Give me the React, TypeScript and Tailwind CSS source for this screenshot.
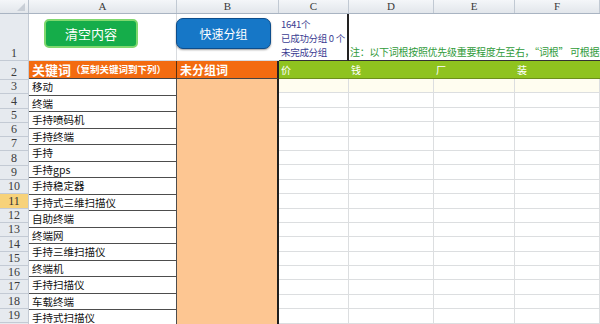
import React from "react";

const cols = ["A", "B", "C", "D", "E", "F"];
const colW = ["w-[148px]", "w-[102px]", "w-[70px]", "w-[85px]", "w-[81px]", "w-[85px]"];

const words = [
  "移动",
  "终端",
  "手持喷码机",
  "手持终端",
  "手持",
  "手持gps",
  "手持稳定器",
  "手持式三维扫描仪",
  "自助终端",
  "终端网",
  "手持三维扫描仪",
  "终端机",
  "手持扫描仪",
  "车载终端",
  "手持式扫描仪",
  "",
];

const labels = Array.from({ length: 18 }, (_, i) => i + 3);

const cjk = "font-['Noto_Sans_CJK_SC','Noto_Sans',sans-serif]";
const num = "font-['Liberation_Serif',serif]";

function RowLabel({ n, h, active }: { n: number; h: string; active?: boolean }) {
  return (
    <div
      className={`w-[29px] ${h} shrink-0 flex items-end justify-center border-b border-r border-[#c3cad4] text-[12px] leading-[14px] ${num} ${
        active ? "bg-[#f7d27a] text-[#333]" : "bg-[#e6eaef] text-[#3b3b3b]"
      }`}
    >
      {n}
    </div>
  );
}

export default function App() {
  return (
    <div className="w-[600px] h-[324px] overflow-hidden bg-white select-none">
      {/* column headers */}
      <div className="flex h-[14px] bg-gradient-to-b from-[#f4f6f9] to-[#e2e6eb] border-b border-[#a9b4c2]">
        <div className="w-[29px] shrink-0 border-r border-[#b9c2cd] relative">
          <div className="absolute right-[3px] bottom-[2px] w-0 h-0 border-l-[8px] border-l-transparent border-b-[8px] border-b-[#c8ced6]" />
        </div>
        {cols.map((c, i) => (
          <div
            key={c}
            className={`${colW[i]} shrink-0 border-r border-[#c1c9d3] flex items-center justify-center text-[11px] text-[#3a3a3a] ${num}`}
          >
            {c}
          </div>
        ))}
      </div>

      <div className="flex">
        {/* row numbers */}
        <div className="flex flex-col w-[29px] shrink-0">
          <RowLabel n={1} h="h-[47px]" />
          <RowLabel n={2} h="h-[19px]" />
          {labels.map((n) => (
            <RowLabel key={n} n={n} h="h-[14.3px]" active={n === 11} />
          ))}
        </div>

        <div className="flex flex-col flex-1">
          {/* row 1 */}
          <div className="flex h-[47px]">
            <div className="w-[148px] shrink-0 pl-[15px] pt-[5px] border-b border-r border-[#d8dbdf]">
              <div className={`w-[94px] h-[29px] rounded-[5px] bg-[#15ad4a] border-2 border-[#7fd86e] flex items-center justify-center text-white text-[13px] ${cjk}`}>
                清空内容
              </div>
            </div>
            <div className="w-[102px] shrink-0 pt-[4px] border-b border-[#d8dbdf]">
              <div className={`-ml-px w-[95px] h-[31px] rounded-[7px] bg-[#1677c7] border border-[#0c4d8c] shadow-[0_1px_2px_rgba(0,0,0,0.4)] flex items-center justify-center text-white text-[12px] ${cjk}`}>
                快速分组
              </div>
            </div>
            <div className={`w-[70px] shrink-0 pl-[2px] pt-[3px] border-r-2 border-[#222] border-b border-b-[#333] text-[9.5px] tracking-[-0.3px] leading-[14px] text-[#3b3d92] whitespace-nowrap ${cjk}`}>
              <div>1641个</div>
              <div>已成功分组 0 个</div>
              <div>未完成分组</div>
            </div>
            <div className="flex-1 border-b border-[#333] relative">
              <div className={`absolute left-[1px] bottom-[2px] whitespace-nowrap text-[10px] tracking-[-0.3px] leading-[12px] text-[#2f9b3a] ${cjk}`}>
                注：以下词根按照优先级重要程度左至右，“词根” 可根据实际情况修改
              </div>
            </div>
          </div>

          {/* row 2 */}
          <div className="flex h-[18px]">
            <div className={`w-[148px] shrink-0 bg-[#f36b10] border-r border-[#5a3010] border-b border-b-[#444] flex items-center pl-[3px] text-white font-bold whitespace-nowrap ${cjk}`}>
              <span className="text-[13px]">关键词</span>
              <span className="text-[9.5px]">（复制关键词到下列）</span>
            </div>
            <div className={`w-[102px] shrink-0 bg-[#f36b10] border-r-2 border-[#222] border-b border-b-[#444] flex items-center pl-[3px] text-white text-[12px] font-bold ${cjk}`}>
              未分组词
            </div>
            {["价", "钱", "厂", "装"].map((t, i) => (
              <div
                key={t}
                className={`${colW[i + 2]} shrink-0 bg-[#8fc31f] border-b border-[#6c8f1a] flex items-center pl-[2px] text-white text-[10px] ${cjk}`}
              >
                {t}
              </div>
            ))}
          </div>

          {/* data area */}
          <div className="flex">
            <div className="flex flex-col w-[148px] shrink-0">
              {words.map((w, i) => (
                <div
                  key={i}
                  className={`h-[16.5px] shrink-0 bg-white border-b border-r border-[#4d4d4d] pl-[3px] pt-[1px] text-[10.5px] leading-[14px] text-[#111] ${cjk}`}
                >
                  {w}
                </div>
              ))}
            </div>
            <div className="w-[102px] shrink-0 h-[264px] bg-[#fdc692] border-r-2 border-[#1e1e1e]" />
            <div className="flex flex-col flex-1">
              {labels.map((n) => (
                <div key={n} className="flex h-[14.4px] shrink-0">
                  {[2, 3, 4, 5].map((c) => (
                    <div
                      key={c}
                      className={`${colW[c]} shrink-0 border-b border-r border-[#dcdee0] ${n === 3 ? "bg-[#fffdf0]" : "bg-white"}`}
                    />
                  ))}
                </div>
              ))}
            </div>
          </div>
        </div>
      </div>
    </div>
  );
}
